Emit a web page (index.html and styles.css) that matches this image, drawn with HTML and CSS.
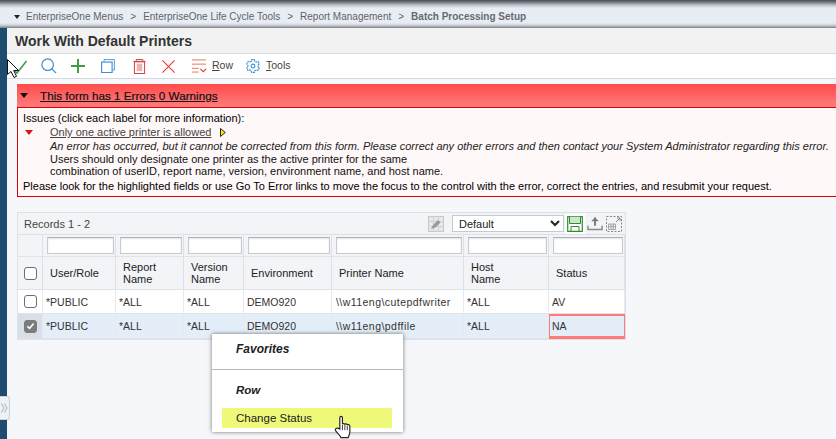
FILE: index.html
```html
<!DOCTYPE html>
<html lang="en">
<head>
<meta charset="utf-8">
<title>Work With Default Printers</title>
<link rel="stylesheet" href="styles.css">
</head>
<body>
<div class="topshade"></div>
<nav class="crumbs">
  <span class="crumb-caret"></span>
  <span>EnterpriseOne Menus</span><span class="sep">&gt;</span>
  <span>EnterpriseOne Life Cycle Tools</span><span class="sep">&gt;</span>
  <span>Report Management</span><span class="sep">&gt;</span>
  <b>Batch Processing Setup</b>
</nav>
<div class="shell">
  <aside class="rail"><div class="rail-tab">
    <svg width="7" height="10" viewBox="0 0 7 10"><path d="M.5 .5 3 5 .5 9.500M3.500 .5 6 5 3.500 9.500" fill="none" stroke="#a9b3bf"/></svg>
  </div></aside>
  <main class="main">
    <h1 class="title">Work With Default Printers</h1>
    <div class="toolbar">
      <svg class="ic ok" width="22" height="20" viewBox="0 0 22 20"><path d="M7 14 10 17 19.500 5" fill="none" stroke="#3f9a3f" stroke-width="1.500"/></svg>
      <svg class="ic find" width="16" height="16" viewBox="0 0 18 18"><circle cx="7.500" cy="7.500" r="6.500" fill="none" stroke="#3b8fd6" stroke-width="1.400"/><path d="M12 12 17 17" stroke="#3b8fd6" stroke-width="1.400"/></svg>
      <svg class="ic add" width="14" height="14" viewBox="0 0 16 16"><path d="M8 0V16M0 8H16" stroke="#3d9a45" stroke-width="2.200"/></svg>
      <svg class="ic copy" width="14" height="14" viewBox="0 0 16 16"><path d="M3.500 3V.7H15.300V12.500H13" fill="none" stroke="#3b8fd6"/><rect x=".7" y="3.500" width="12" height="12" fill="#fff" stroke="#3b8fd6" stroke-width="1.300"/></svg>
      <svg class="ic del" width="13" height="15" viewBox="0 0 14 16"><path d="M3.500 2V.5H10.500V2M.5 2.500H13.500" fill="none" stroke="#d0343a"/><rect x="1.500" y="3" width="11" height="12.500" fill="#fff" stroke="#d0343a"/><rect x="4" y="5" width="6" height="8" fill="#efb1b1"/></svg>
      <svg class="ic cancel" width="13" height="13" viewBox="0 0 16 16"><path d="M.5 .5 15.500 15.500M15.500 .5 .5 15.500" stroke="#e5383d" stroke-width="1.300"/></svg>
      <svg class="ic rowmenu" width="16" height="14" viewBox="0 0 17 15"><path d="M1 1H16M1 5.500H16M1 10H8M1 14H8" stroke="#ef6a50"/><path d="M10 10.500 13 13.500 16 10.500" fill="none" stroke="#e5383d" stroke-width="1.200"/></svg>
      <span class="tool-label"><u>R</u>ow</span>
      <svg class="ic gear" width="14" height="14" viewBox="0 0 15 15"><path d="M6 .7H9L9.400 2.500 11 3.300 12.800 2.700 14.300 5.300 13 6.500V8.500L14.300 9.700 12.800 12.300 11 11.700 9.400 12.500 9 14.300H6L5.600 12.500 4 11.700 2.200 12.300 .7 9.700 2 8.500V6.500L.7 5.300 2.200 2.700 4 3.300 5.600 2.500Z" fill="none" stroke="#3f95d8" stroke-width="1.200" stroke-dasharray="2.200 .6"/><circle cx="7.500" cy="7.500" r="2" fill="none" stroke="#3f95d8" stroke-width="1.200"/></svg>
      <span class="tool-label"><u>T</u>ools</span>
    </div>
    <section class="errors">
      <header class="err-head"><span class="err-caret"></span><u>This form has 1 Errors 0 Warnings</u></header>
      <div class="err-body">
        <p class="err-intro">Issues (click each label for more information):</p>
        <div class="issue">
          <span class="issue-caret"></span>
          <div class="issue-text">
            <div class="issue-link"><u>Only one active printer is allowed</u><svg class="yellow-arrow" width="6" height="9" viewBox="0 0 6 9"><path d="M.5 .5 5.300 4.500 .5 8.500Z" fill="#ffe600" stroke="#222"/></svg></div>
            <div class="issue-note"><i>An error has occurred, but it cannot be corrected from this form. Please correct any other errors and then contact your System Administrator regarding this error.</i></div>
            <div class="issue-line">Users should only designate one printer as the active printer for the same</div>
            <div class="issue-line">combination of userID, report name, version, environment name, and host name.</div>
          </div>
        </div>
        <p class="err-foot">Please look for the highlighted fields or use Go To Error links to move the focus to the control with the error, correct the entries, and resubmit your request.</p>
      </div>
    </section>
    <section class="grid">
      <div class="grid-bar">
        <span class="records">Records 1 - 2</span>
        <svg class="pen" width="16" height="16" viewBox="0 0 16 16"><rect x=".5" y=".5" width="15" height="15" fill="#e8e8e8" stroke="#c4c8cc"/><path d="M0 5.500H16M0 10.500H16M5.500 0V16M10.500 0V16" stroke="#d0d3d6"/><path d="M3 13 5 9 10 4 12.500 6.500 7.500 11.500Z" fill="#9a9a9a"/></svg>
        <select class="layout"><option>Default</option></select>
        <span class="save"><svg width="16" height="16" viewBox="0 0 16 16"><path d="M.7 .7H15.300V15.300H.7Z" fill="#fff" stroke="#2e8b2e" stroke-width="1.200"/><path d="M2.500 .7V7.500H13.500V.7" fill="#cfe6c8" stroke="#2e8b2e"/><path d="M4 15.300V10.500H12V15.300" fill="none" stroke="#2e8b2e"/></svg></span>
        <svg class="export" width="16" height="15" viewBox="0 0 17 15"><path d="M8.500 1V10" stroke="#777" stroke-width="2"/><path d="M4.500 5 8.500 1 12.500 5Z" fill="#777"/><path d="M1 10V14H16V10" fill="none" stroke="#8a8a8a" stroke-width="1.600"/></svg>
        <svg class="expand" width="16" height="16" viewBox="0 0 16 16"><rect x=".5" y=".5" width="15" height="15" fill="none" stroke="#888" stroke-dasharray="2 1.500"/><path d="M10 6 14 2M11 2H14V5" fill="none" stroke="#888"/><path d="M2.500 8H9.500V13.500H2.500ZM2.500 10.700H9.500M5 8V13.500M7.300 8V13.500" fill="none" stroke="#888" stroke-width=".7"/></svg>
      </div>
      <div class="table">
        <div class="cell filter blank"></div>
        <div class="cell filter"><span class="qbe"></span></div>
        <div class="cell filter"><span class="qbe"></span></div>
        <div class="cell filter"><span class="qbe"></span></div>
        <div class="cell filter"><span class="qbe"></span></div>
        <div class="cell filter"><span class="qbe"></span></div>
        <div class="cell filter"><span class="qbe"></span></div>
        <div class="cell filter"><span class="qbe"></span></div>

        <div class="cell head check"><span class="box"></span></div>
        <div class="cell head">User/Role</div>
        <div class="cell head">Report<br>Name</div>
        <div class="cell head">Version<br>Name</div>
        <div class="cell head">Environment</div>
        <div class="cell head">Printer Name</div>
        <div class="cell head">Host<br>Name</div>
        <div class="cell head">Status</div>

        <div class="cell check"><span class="box"></span></div>
        <div class="cell">*PUBLIC</div>
        <div class="cell">*ALL</div>
        <div class="cell">*ALL</div>
        <div class="cell">DEMO920</div>
        <div class="cell path">\\w11eng\cutepdfwriter</div>
        <div class="cell">*ALL</div>
        <div class="cell">AV</div>

        <div class="cell sel check on"><span class="box checked"><svg width="14" height="14" viewBox="0 0 14 14"><path d="M3 7.500 5.800 10 11 3.800" fill="none" stroke="#fff" stroke-width="2"/></svg></span></div>
        <div class="cell sel">*PUBLIC</div>
        <div class="cell sel">*ALL</div>
        <div class="cell sel">*ALL</div>
        <div class="cell sel">DEMO920</div>
        <div class="cell sel path">\\w11eng\pdffile</div>
        <div class="cell sel">*ALL</div>
        <div class="cell sel bad">NA</div>
      </div>
    </section>
  </main>
</div>
<div class="menu">
  <div class="menu-group first">Favorites</div>
  <hr class="menu-rule">
  <div class="menu-group">Row</div>
  <div class="menu-item">Change Status</div>
</div>
<svg class="cursor-arrow" width="14" height="20" viewBox="0 0 14 20"><path d="M.5 .5V15.500L4 12.500 7 18.500 9.500 17.300 6.700 11.500H11.500Z" fill="#fff" stroke="#111"/></svg>
<svg class="cursor-hand" width="19" height="24" viewBox="0 0 18 22"><path d="M5.500 13V2.500C5.500 .5 8 .5 8 2.500V8.500C8 7.500 10.300 7.500 10.300 8.800 10.300 7.800 12.600 7.800 12.600 9.200 12.600 8.400 15 8.500 15 10.200V15.500C15 18 14 19 13.500 21H6.500C5.500 18.500 3.500 17.500 1.500 14.500 .5 13 2.500 11 5.500 13Z" fill="#fff" stroke="#222" stroke-width="1.100"/><path d="M8 9V14M10.300 9V14M12.600 9.500V14" stroke="#222" stroke-width=".8"/></svg>
</body>
</html>
```
FILE: styles.css
```css
* { box-sizing: border-box; }
html, body { margin: 0; padding: 0; }
body {
  width: 836px;
  height: 439px;
  overflow: hidden;
  position: relative;
  background: #f6f7fa;
  font-family: "Liberation Sans", Arial, sans-serif;
  font-size: 11px;
  color: #000;
}
u { text-underline-offset: 1px; }
p { margin: 0; }

.topshade {
  height: 8px;
  background: linear-gradient(#4a4d52 0, #6f7378 25%, #b4bac1 60%, #e8edf5 100%);
}
.crumbs {
  height: 20px;
  display: flex;
  align-items: center;
  padding: 0 0 3px 14px;
  font-size: 10px;
  color: #5f6368;
  background: linear-gradient(#e8edf5 0, #e8edf5 75%, #c3c8ce 88%, #7a7d81 100%);
}
.crumb-caret {
  width: 0;
  height: 0;
  margin-right: 6px;
  border: 3px solid transparent;
  border-top: 4px solid #222;
  border-bottom: 0;
}
.sep { margin: 0 7px; }
.crumbs b { color: #666a6e; }

.shell { display: flex; height: 411px; }
.rail {
  width: 7px;
  flex: none;
  background: #1f4b6e;
  position: relative;
}
.rail-tab {
  position: absolute;
  left: 0;
  top: 368px;
  width: 10px;
  height: 24px;
  display: flex;
  align-items: center;
  justify-content: center;
  background: #eef1f5;
  border: 1px solid #ccd2d9;
  border-left: 0;
  border-radius: 0 3px 3px 0;
}
.main { flex: 1; min-width: 0; }

.title {
  margin: 0;
  height: 26px;
  padding: 1px 8px 0;
  line-height: 25px;
  font-size: 14px;
  font-weight: bold;
  color: #333;
  background: #f2f2f2;
  border-bottom: 1px solid #d8d8d8;
}
.toolbar {
  height: 25px;
  display: flex;
  align-items: center;
  background: #fff;
  border-bottom: 1px solid #d4d9de;
}
.ic { flex: none; }
.find { margin-left: 12px; }
.add { margin-left: 14px; }
.copy { margin-left: 16px; }
.del { margin-left: 18px; }
.cancel { margin-left: 16px; }
.rowmenu { margin-left: 16px; }
.tool-label { margin-left: 5px; font-size: 10.500px; color: #444; position: relative; top: -1px; }
.gear { margin-left: 13px; }
.gear + .tool-label { margin-left: 6px; }

.errors { margin: 5px 0 0 10px; }
.err-head {
  height: 23px;
  display: flex;
  align-items: center;
  padding-bottom: 1px;
  font-size: 11.700px;
  color: #111;
  background: linear-gradient(#ff4b4b, #ff7d7d);
  -webkit-text-stroke: .2px #111;
}
.err-caret {
  width: 0;
  height: 0;
  margin: 0 12px 0 3px;
  border: 4px solid transparent;
  border-top: 5px solid #111;
  border-bottom: 0;
}
.err-body {
  height: 90px;
  padding: 3px 0 0 5px;
  border: 1px solid #e00000;
  border-right: 0;
  background: #fff8f8;
  line-height: 13px;
  font-size: 11px;
}
.err-intro { height: 14px; line-height: 14px; }
.issue { display: flex; }
.issue-caret {
  width: 0;
  height: 0;
  margin: 5px 17px 0 2px;
  border: 4px solid transparent;
  border-top: 5px solid #e01010;
  border-bottom: 0;
  flex: none;
}
.issue-text { white-space: nowrap; min-width: 0; }
.issue-link { height: 14px; line-height: 14px; color: #444; display: flex; align-items: center; }
.yellow-arrow { margin-left: 9px; }
.issue-note { height: 13px; margin-top: 1px; line-height: 13px; color: #222; }
.issue-line { height: 12px; line-height: 12px; color: #111; }
.err-foot { margin-top: 3px; white-space: nowrap; }

.grid {
  width: 609px;
  margin: 15px 0 0 10px;
  border: 1px solid #dde1e6;
  background: #f2f4f7;
}
.grid-bar {
  height: 21px;
  display: flex;
  align-items: center;
  padding: 0 3px 0 6px;
  color: #444;
}
.records { font-size: 11px; white-space: nowrap; }
.pen { margin-left: auto; }
.layout {
  width: 112px;
  height: 17px;
  margin-left: 8px;
  padding: 0 0 0 2px;
  font: 11px "Liberation Sans", Arial, sans-serif;
  color: #222;
  background: #fff;
  border: 1px solid #c4cad2;
  border-radius: 0;
}
.save {
  width: 20px;
  height: 20px;
  margin-left: 1px;
  display: flex;
  align-items: center;
  justify-content: center;
  background: #fff;
}
.export { margin-left: 2px; }
.expand { margin-left: 3px; }

.table {
  display: grid;
  grid-template-columns: 25px 73px 68px 60px 88px 132px 85px 76px;
  grid-template-rows: 22px 33px 24px 25px;
  border-top: 1px solid #dde1e6;
}
.cell {
  display: flex;
  align-items: center;
  padding-left: 3px;
  background: #fff;
  color: #333;
  font-size: 10.500px;
  white-space: nowrap;
  border-right: 1px solid #e6e9ed;
  border-bottom: 1px solid #e0e4e9;
}
.path { letter-spacing: .45px; padding-left: 4px; }
.filter { background: #f2f4f7; padding: 0 1px 0 4px; border-right-color: #dde1e6; }
.qbe {
  display: block;
  width: 100%;
  height: 17px;
  background: #fff;
  border: 1px solid #c8ccd2;
  border-top-color: #aab0b6;
  box-shadow: inset 0 1px 2px #e4e4e4;
}
.head {
  background: #f2f4f7;
  color: #222;
  font-size: 11px;
  padding-left: 7px;
  line-height: 12px;
  border-right: 1px solid #dde1e6;
  border-bottom: 1px solid #dde1e6;
}
.check { justify-content: center; padding: 0; }
.box {
  width: 13px;
  height: 13px;
  display: block;
  background: #fff;
  border: 1px solid #6a6f75;
  border-radius: 3px;
}
.box.checked { background: #7c7c7c; border-color: #7c7c7c; display: flex; align-items: center; justify-content: center; }
.sel { background: #e3eef8; }
.on { background: #d9dfe6; }
.bad { border: 1px solid #ff7b7b; border-top-width: 2px; border-bottom-width: 3px; padding-left: 2px; }

.menu {
  position: absolute;
  left: 212px;
  top: 334px;
  width: 191px;
  height: 98px;
  background: #fff;
  box-shadow: 0 0 4px rgba(0, 0, 0, .55);
  font-size: 11.500px;
}
.menu-group {
  padding-left: 24px;
  font-style: italic;
  font-weight: bold;
  color: #222;
  line-height: 14px;
}
.menu-group.first { margin-top: 8px; font-size: 12px; }
.menu-rule { height: 1px; margin: 13px 0 13px; border: 0; background: #b3b6ba; }
.menu-item {
  margin: 11px 11px 0 10px;
  height: 20px;
  padding-left: 14px;
  line-height: 20px;
  background: #eef97a;
  color: #222;
}
.cursor-arrow { position: absolute; left: 7px; top: 59px; }
.cursor-hand { position: absolute; left: 334px; top: 415px; }
```
